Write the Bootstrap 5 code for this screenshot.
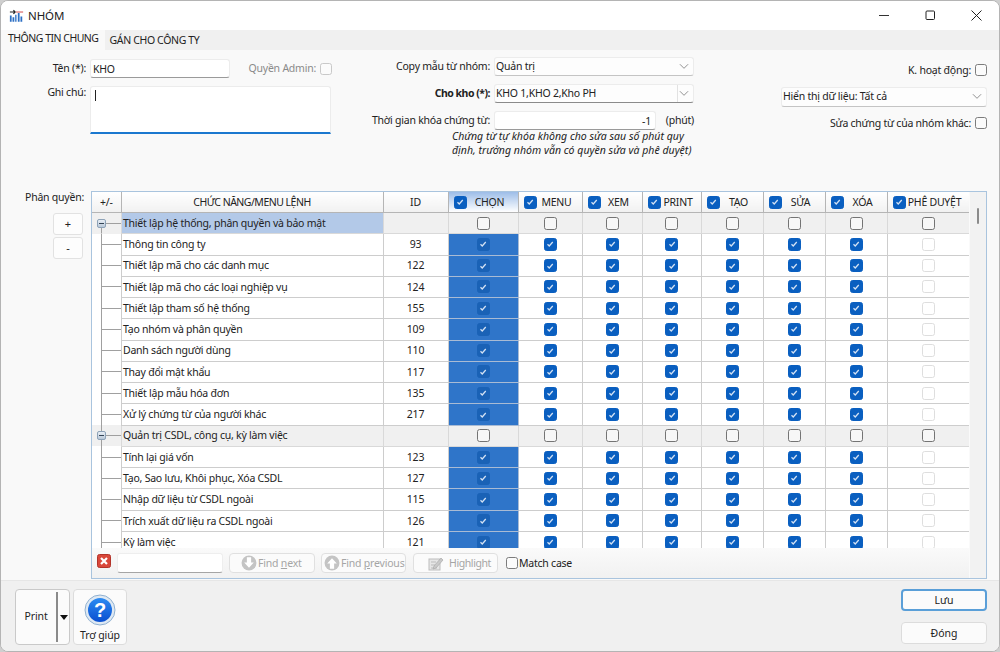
<!DOCTYPE html>
<html lang="vi">
<head>
<meta charset="utf-8">
<title>NHÓM</title>
<link href="https://cdn.jsdelivr.net/npm/bootstrap@5.3.0/dist/css/bootstrap.min.css" rel="stylesheet">
<style>
html,body{height:652px;overflow:hidden;background:#cfcfcf}
body{font-family:"Noto Sans","Open Sans",sans-serif;font-size:10.5px;color:#222;line-height:1.2;letter-spacing:-.23px}
.win{width:1000px;height:652px;border:1px solid #b4b4b4;border-radius:8px;overflow:hidden;background:#f9f9f9;display:flex;flex-direction:column}
.ttl{height:29px;background:#fff;flex:none}
.ttl-name{font-size:11.5px;margin-left:4px;letter-spacing:-.1px}
.ctl{width:46px;display:flex;justify-content:center}
.tabbar{height:20px;background:#f0f0f0;flex:none;border:0;align-items:flex-end}
.tabbar .nav-link{font-size:10.5px;letter-spacing:-.35px;color:#222;border:0;border-radius:0;padding:0 4px 0 5px;height:18px;line-height:17px;background:#f0f0f0;margin:0}
.tabbar .nav-link.active{letter-spacing:-.5px;background:#f9f9f9;height:20px;line-height:16px;padding:0 6px 0 7px;color:#222}
.tabbar .nav-item{margin:0}
.mainp{flex:1 1 auto;min-height:0}
.toppart{height:141px}
.c1{width:331px;padding-top:9px;flex:none}
.c2{width:353px;margin-left:9px;padding-top:7px;flex:none}
.c3{width:206px;margin-left:auto;margin-right:12px;padding-top:14px;flex:none;display:flex;flex-direction:column;gap:10px}
.lb1{width:85px;text-align:right;margin-right:4px;flex:none}
.lb2{width:149px;text-align:right;margin-right:4px;flex:none}
.lb2.fw-bold{letter-spacing:-.5px}
.fld{height:19px;min-height:0;font-size:10.5px;letter-spacing:-.23px;padding:0 4px 0 2px;border:1px solid #ececec;border-bottom:1px solid #9a9a9a;border-radius:3px;background-color:#fff;color:#222;box-shadow:none}
.sel{--bs-form-select-bg-img:url("data:image/svg+xml,%3csvg xmlns='http://www.w3.org/2000/svg' viewBox='0 0 11 7'%3e%3cpath fill='none' stroke='%23888' d='M1 1l4.500 4.500L10 1'/%3e%3c/svg%3e");height:19px;min-height:0;font-size:10.5px;letter-spacing:-.23px;padding:0 18px 0 1px;border:1px solid #ececec;border-bottom:1px solid #c4c4c4;border-radius:3px;background-color:#fdfdfd;background-position:right 4px center;background-size:10px 7px;color:#222;box-shadow:none;line-height:17px}
.sel-sep{background-image:var(--bs-form-select-bg-img),linear-gradient(#e2e2e2,#e2e2e2);background-size:10px 7px,1px 100%;background-position:right 4px center,right 15px center;background-repeat:no-repeat;border-bottom-color:#8a8a8a}
.ta{height:48px;width:241px;resize:none;font-size:10.5px;padding:3px 4px;border:1px solid #ececec;border-bottom:2px solid #1b78cf;border-radius:3px 3px 0 0;background:#fff}
.caret{width:1px;height:11px;background:#222;display:block}
.note{font-style:italic;line-height:14px;text-align:left;margin-top:-1px;color:#222;padding-left:111px;letter-spacing:.03px}
.cbx{width:12px;height:12px;margin:0;border:1px solid #7c7c7c;border-radius:3px;background-color:#fbfbfb;flex:none;box-shadow:none}
.cbx.soft{border-color:#c9c9c9}
.muted2{color:#8a8a8a}
.bottom{flex:1 1 auto;min-height:0}
.leftc{width:90px;flex:none}
.perm{text-align:right;padding-right:7px}
.pm{width:30px;height:22px;margin-left:52px;padding:0;font-size:11px;line-height:20px;border:1px solid #e2e2e2;border-radius:3px;background:#fdfdfd;color:#222;display:block}
.pm1{margin-top:9px}
.pm2{margin-top:2px}
.frame{width:896px;height:388px;border:1px solid #a9c4de;flex:none;display:flex;background:#f4f4f4}
.gridc{width:877px;flex:none;display:flex;flex-direction:column}
.clip{height:356px;overflow:hidden;flex:none;background:#fff}
.gt{width:877px;table-layout:fixed;border-collapse:collapse;margin:0}
.gt th,.gt td{padding:0;border:1.5px solid #cdcdcd;height:21.27px;text-align:center;vertical-align:middle;font-weight:400;font-size:10.5px;color:#222;background:#fff;overflow:hidden;white-space:nowrap}
.gt th{height:20.5px;background:linear-gradient(#fff,#f1f1f1);border-color:#b5b5b5;border-top:0}
.gt th.fname{letter-spacing:-.5px}
.gt th:first-child,.gt td:first-child{border-left:0}
.gt th.hsel{background:linear-gradient(#9dbde8,#fff)}
.hc{display:flex;align-items:center;padding-left:5px}
.hc span{flex:1 1 auto;text-align:center;padding-right:5px}
.gt .cbx{display:block;margin:0 auto;width:13px;height:13px}
.gt .cbx.on{background-color:#0a5fc0;border-color:#0a5fc0;background-size:10px;background-image:url("data:image/svg+xml,%3csvg xmlns='http://www.w3.org/2000/svg' viewBox='0 0 20 20'%3e%3cpath fill='none' stroke='%23d4e2f4' stroke-width='2.500' d='M5 10.500l3.500 3.500 7-8'/%3e%3c/svg%3e")}
.hc .cbx{margin:0!important}
.gt .cbx.off{background-color:#f7f7f7;border-color:#747474}
.gt .cbx.dis{background-color:#fff;border-color:#dedede;opacity:1}
.gt td.name{text-align:left;padding-left:1.5px}
.gt tr.grp td{background:#f0f0f0;border-color:#d9d9d9}
.gt tr.grp td.name.first{background:#b3c9e8}
.gt td.sel2{background:#2f75c9;border-color:#a9bbd4}
.gt td.sel2 .cbx.on{background-color:#1a62b6;border-color:#1a62b6}
.gt td.tree{border-top:0;border-bottom:0;background:linear-gradient(#a0a0a0,#a0a0a0) 9px 0/1px 100% no-repeat,linear-gradient(#a0a0a0,#a0a0a0) 9px 50%/100% 1px no-repeat,#fff}
.gt tr.grp td.tree{background:linear-gradient(#a0a0a0,#a0a0a0) 9px 100%/1px 50% no-repeat,linear-gradient(#a0a0a0,#a0a0a0) 14px 50%/100% 1px no-repeat,#f0f0f0}
.gt tr.grp2 td.tree{background:linear-gradient(#a0a0a0,#a0a0a0) 9px 0/1px 100% no-repeat,linear-gradient(#a0a0a0,#a0a0a0) 14px 50%/100% 1px no-repeat,#f0f0f0}
.tbox{display:block;width:9px;height:9px;margin-left:5px;border:1px solid #8ea3b8;border-radius:2px;background:linear-gradient(#e8eef5,#b9c8d8)}
.tbox::after{content:"";display:block;width:5px;height:1px;background:#345;margin:3px 0 0 1px}
.findb{height:30px;flex:none;display:flex;align-items:center;background:linear-gradient(#fafafa,#f1f1f1);padding-left:5px}
.xbtn{width:14px;height:14px;flex:none;margin-top:-4px}
.finp{width:106px;height:20px;margin-left:6px;background:#fff;border:1px solid #eee;border-bottom:1px solid #a5a5a5;border-radius:3px;padding:0;min-height:0}
.fbtn,.fbtn:disabled{height:20px;padding:0;border:1px solid #e0e0e0;border-radius:4px;background:#fbfbfb;color:#a5a5a5;font-size:10.5px;letter-spacing:-.2px;display:flex;align-items:center;gap:1px;line-height:1;opacity:1;white-space:nowrap;overflow:hidden}
.fbtn svg{flex:none}
.f1{width:86px;margin-left:6px}.f1.f1{padding-left:11px}
.f2{width:85px;margin-left:6px}.f2.f2{padding-left:2px}
.f3{width:85px;margin-left:7px}.f3.f3{padding-left:14px;letter-spacing:-.4px}
.und{text-decoration:underline}
.scb{width:17px;flex:none;background:#f2f2f2;display:flex;justify-content:center;border-left:1px solid #fafafa}
.thumb{width:2px;height:16px;margin-top:16px;background:#8b8b8b;border-radius:1px}
.foot{height:71px;flex:none;background:#f0f0f0;border-top:1px solid #e6e6e6;padding:8px 12px 0 14px}
.tool{height:56px;border:1px solid #dcdcdc;border-radius:4px;background:#fbfbfb;padding:0;color:#222;font-size:10.5px;letter-spacing:-.1px}
.prnt{width:55px;display:flex;align-items:center;border-color:#c9c9c9}
.prnt b{font-weight:400;width:40px;text-align:center}
.prnt i{display:block;width:1px;border-left:2px solid #8a8a8a;height:50px}
.prnt u{display:block;width:0;height:0;border:4.5px solid transparent;border-top:5px solid #111;border-bottom:0;margin-left:2px}
.hlp{width:54px;margin-left:3px;display:flex;flex-direction:column;align-items:center;padding-top:4px;gap:2px}
.btnr{width:86px;height:22px;padding:0;font-size:10.5px;line-height:20px;border:1px solid #dcdcdc;border-radius:4px;background:#fbfbfb;color:#222}
.btnr.prim{border:2px solid #5a9fd8;line-height:18px}
.rt{gap:11px}
</style>
</head>
<body>
<div class="win">
  <div class="ttl d-flex align-items-center ps-2">
    <svg width="15" height="14" viewBox="0 0 17 15"><path d="M1 3h6M5 1l2 2-2 2" fill="none" stroke="#222" stroke-width="1.3"/><path d="M1 7h2v7H1zM4 9h2v5H4zM7 6h1.500v8H7zM10 4h2v10h-2zM13 8h2v6h-2z" fill="#2c6fc4"/><path d="M8 3h8" stroke="#c33" stroke-width="1"/></svg>
    <span class="ttl-name">NHÓM</span>
    <div class="ms-auto d-flex">
      <div class="ctl"><svg width="11" height="11" viewBox="0 0 11 11"><path d="M0 5.500h10" stroke="#333"/></svg></div>
      <div class="ctl"><svg width="11" height="11" viewBox="0 0 11 11"><rect x="1" y="1" width="8.500" height="8.500" rx="1" fill="none" stroke="#222"/></svg></div>
      <div class="ctl"><svg width="11" height="11" viewBox="0 0 11 11"><path d="M.5.5l10 10M10.500.5l-10 10" stroke="#222"/></svg></div>
    </div>
  </div>
  <ul class="nav nav-tabs tabbar">
    <li class="nav-item"><a class="nav-link active" href="#">THÔNG TIN CHUNG</a></li>
    <li class="nav-item"><a class="nav-link" href="#">GÁN CHO CÔNG TY</a></li>
  </ul>
  <div class="mainp d-flex flex-column">
    <div class="toppart d-flex">
      <div class="c1">
        <div class="d-flex align-items-center">
          <label class="lb1">Tên (*):</label>
          <input class="form-control fld" style="width:140px" value="KHO">
          <span class="ms-auto muted2 me-1">Quyền Admin:</span><input class="form-check-input cbx soft" type="checkbox">
        </div>
        <div class="d-flex mt-2">
          <label class="lb1">Ghi chú:</label>
          <div class="ta"><span class="caret"></span></div>
        </div>
      </div>
      <div class="c2">
        <div class="d-flex align-items-center">
          <label class="lb2">Copy mẫu từ nhóm:</label>
          <select class="form-select sel" style="width:200px"><option>Quản trị</option></select>
        </div>
        <div class="d-flex align-items-center mt-2">
          <label class="lb2 fw-bold">Cho kho (*):</label>
          <select class="form-select sel sel-sep" style="width:200px"><option>KHO 1,KHO 2,Kho PH</option></select>
        </div>
        <div class="d-flex align-items-center mt-2">
          <label class="lb2">Thời gian khóa chứng từ:</label>
          <input class="form-control fld text-end" style="width:162px" value="-1">
          <span class="ms-auto">(phút)</span>
        </div>
        <div class="note">Chứng từ tự khóa không cho sửa sau số phút quy<br>định, trưởng nhóm vẫn có quyền sửa và phê duyệt)</div>
      </div>
      <div class="c3">
        <div class="d-flex align-items-center justify-content-end">
          <span class="me-1">K. hoạt động:</span><input class="form-check-input cbx" type="checkbox">
        </div>
        <select class="form-select sel" style="height:20px;width:206px"><option>Hiển thị dữ liệu: Tất cả</option></select>
        <div class="d-flex align-items-center justify-content-end">
          <span class="me-1">Sửa chứng từ của nhóm khác:</span><input class="form-check-input cbx" type="checkbox">
        </div>
      </div>
    </div>
    <div class="bottom d-flex">
      <div class="leftc">
        <div class="perm">Phân quyền:</div>
        <button class="btn pm pm1">+</button>
        <button class="btn pm pm2">-</button>
      </div>
      <div class="frame">
        <div class="gridc">
          <div class="clip">
            <table class="gt">
              <colgroup><col style="width:29px"><col style="width:262px"><col style="width:65px"><col style="width:70px"><col style="width:64px"><col style="width:60px"><col style="width:59px"><col style="width:62px"><col style="width:62px"><col style="width:62px"><col style="width:82px"></colgroup>
              <thead><tr id="hd"></tr></thead>
              <tbody id="bd"></tbody>
            </table>
          </div>
          <div class="findb">
            <svg class="xbtn" viewBox="0 0 14 14"><rect x=".5" y=".5" width="13" height="13" rx="2" fill="#d9473a" stroke="#b3342a"/><path d="M4 4l6 6M10 4l-6 6" stroke="#fff" stroke-width="2.200"/></svg>
            <input class="form-control finp">
            <button class="btn fbtn f1" disabled><svg width="16" height="16" viewBox="0 0 15 15"><circle cx="7.500" cy="7.500" r="7" fill="#c4c4c4"/><path d="M5.500 2v5H3l4.500 5L12 7H9.500V2z" fill="#fff"/></svg><span>Find <span class="und">n</span>ext</span></button>
            <button class="btn fbtn f2" disabled><svg width="16" height="16" viewBox="0 0 15 15"><circle cx="7.500" cy="7.500" r="7" fill="#c4c4c4"/><path d="M5.500 13V8H3l4.500-5L12 8H9.500v5z" fill="#fff"/></svg><span>Find <span class="und">p</span>revious</span></button>
            <button class="btn fbtn f3" disabled><svg width="16" height="15" viewBox="0 0 16 15"><rect x="1" y="3" width="11" height="11" fill="#e6e6e6" stroke="#bdbdbd"/><path d="M3 6h5M3 9h4M3 12h6" stroke="#bbb"/><path d="M6 10l7-8 2 2-7 8-3 1z" fill="#c9c9c9" stroke="#aaa" stroke-width=".7"/></svg><span class="ms-1">Highlight</span></button>
            <input class="form-check-input cbx ms-2" type="checkbox"><span style="margin-left:1px">Match case</span>
          </div>
        </div>
        <div class="scb"><div class="thumb"></div></div>
      </div>
    </div>
  </div>
  <div class="foot d-flex">
    <button class="btn tool prnt"><b>Print</b><i></i><u></u></button>
    <button class="btn tool hlp">
      <svg width="32" height="32" viewBox="0 0 32 32"><defs><linearGradient id="hg" x1="0" y1="0" x2="0" y2="1"><stop offset="0" stop-color="#2c8bf2"/><stop offset="1" stop-color="#0a4fd0"/></linearGradient></defs><circle cx="16" cy="16" r="15" fill="#dfe9f3" stroke="#8fb0d0"/><circle cx="16" cy="16" r="12" fill="url(#hg)"/><text x="16" y="23" text-anchor="middle" font-family="Liberation Sans" font-weight="700" font-size="20" fill="#fff">?</text></svg>
      <span>Trợ giúp</span>
    </button>
    <div class="ms-auto d-flex flex-column rt">
      <button class="btn btnr prim">Lưu</button>
      <button class="btn btnr">Đóng</button>
    </div>
  </div>
</div>
<script>
var heads=["CHỌN","MENU","XEM","PRINT","TẠO","SỬA","XÓA","PHÊ DUYỆT"];
var rows=[["Thiết lập hệ thống, phân quyền và bảo mật","",1],["Thông tin công ty",93],["Thiết lập mã cho các danh mục",122],["Thiết lập mã cho các loại nghiệp vụ",124],["Thiết lập tham số hệ thống",155],["Tạo nhóm và phân quyền",109],["Danh sách người dùng",110],["Thay đổi mật khẩu",117],["Thiết lập mẫu hóa đơn",135],["Xử lý chứng từ của người khác",217],["Quản trị CSDL, công cụ, kỳ làm việc","",2],["Tính lại giá vốn",123],["Tạo, Sao lưu, Khôi phục, Xóa CSDL",127],["Nhập dữ liệu từ CSDL ngoài",115],["Trích xuất dữ liệu ra CSDL ngoài",126],["Kỳ làm việc",121]];
function cb(c,ch,dis){return '<input type="checkbox" class="form-check-input cbx '+c+'"'+(ch?' checked':'')+(dis?' disabled':'')+'>';}
var h='<th>+/-</th><th class="fname">CHỨC NĂNG/MENU LỆNH</th><th>ID</th>';
heads.forEach(function(t,i){h+='<th'+(i==0?' class="hsel"':'')+'><div class="hc">'+cb('on',1)+'<span>'+t+'</span></div></th>';});
document.getElementById('hd').innerHTML=h;
var b='';
rows.forEach(function(r){
  var g=r[2];
  b+='<tr class="'+(g?'grp'+(g==2?' grp2':''):'')+'"><td class="tree">'+(g?'<span class="tbox"></span>':'')+'</td><td class="name'+(g==1?' first':'')+'">'+r[0]+'</td><td>'+r[1]+'</td>';
  for(var i=0;i<8;i++){
    b+='<td'+(i==0&&!g?' class="sel2"':'')+'>'+(g?cb('off',0):(i==7?cb('dis',0,1):cb('on',1)))+'</td>';
  }
  b+='</tr>';
});
document.getElementById('bd').innerHTML=b;
</script>
<script src="https://cdn.jsdelivr.net/npm/bootstrap@5.3.0/dist/js/bootstrap.bundle.min.js"></script>
</body>
</html>
